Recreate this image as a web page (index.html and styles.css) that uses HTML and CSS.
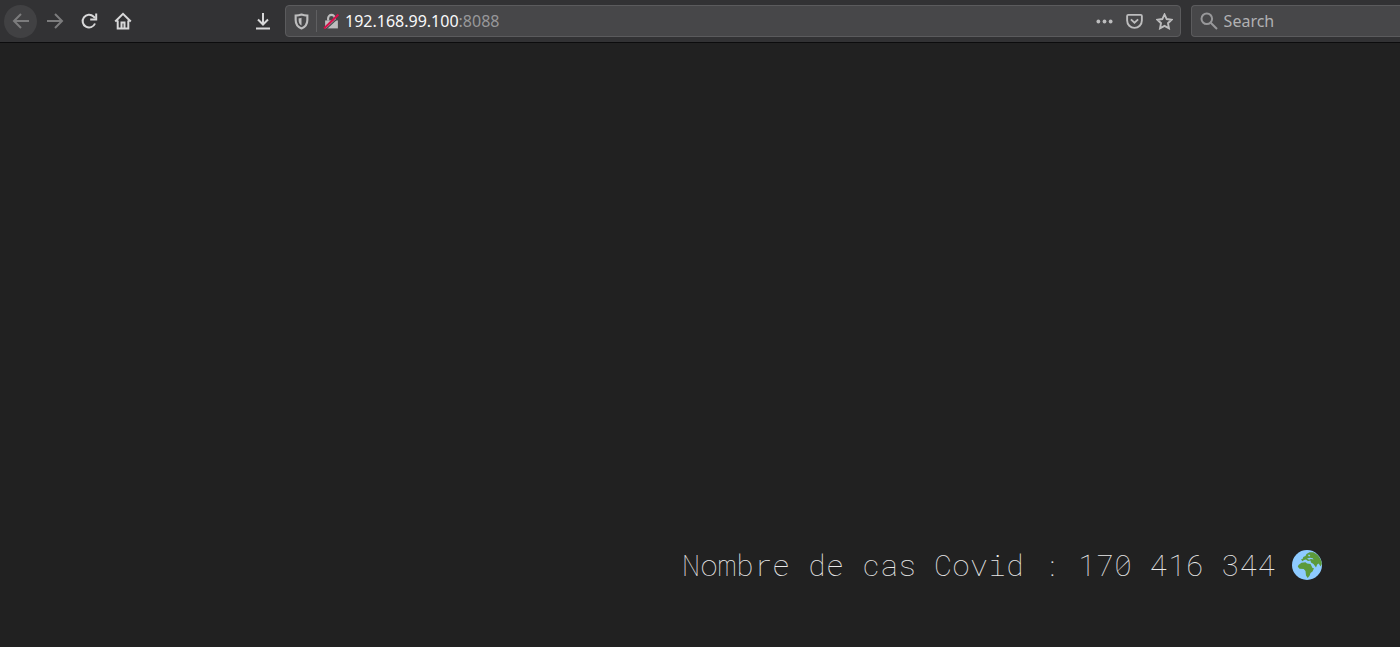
FILE: index.html
```html
<!DOCTYPE html>
<html lang="fr">
<head>
  <meta charset="UTF-8">
  <meta name="viewport" content="width=device-width, initial-scale=1.0">
  <title>192.168.99.100:8088</title>
  <link rel="stylesheet" href="styles.css">
</head>

<body>
  <!-- Browser toolbar -->
  <header class="toolbar">
    <nav class="nav-buttons">
      <button class="nav-btn back" aria-label="Back">
        <svg viewBox="0 0 18 18"><path d="M17 9H2M9 2L2 9l7 7"/></svg>
      </button>
      <button class="nav-btn forward" aria-label="Forward">
        <svg viewBox="0 0 18 18"><path d="M1 9h15M9 2l7 7-7 7"/></svg>
      </button>
      <button class="nav-btn" aria-label="Reload">
        <svg viewBox="0 0 18 18"><path d="M15 11.5A6.4 6.4 0 1 1 13.500 4.500L15 6"/><path d="M16.200 1.500v6h-6"/></svg>
      </button>
      <button class="nav-btn" aria-label="Home">
        <svg viewBox="0 0 18 18"><path d="M1.200 9.500L9 1.800l7.800 7.700M3.700 8.500v8h10.600v-8M7.500 16v-5.500h3V16"/></svg>
      </button>
    </nav>

    <button class="nav-btn" aria-label="Downloads">
      <svg viewBox="0 0 18 18"><path d="M9 1v11.500M4 7.500l5 5 5-5M2 16.500h14"/></svg>
    </button>

    <div class="url-bar">
      <button class="icon-btn" aria-label="Tracking protection">
        <svg viewBox="0 0 16 16"><path d="M8 1.500c2 .8 4 1 5.500 1v4c0 4-1.800 6.500-5.500 8-3.700-1.500-5.500-4-5.500-8v-4c1.500 0 3.500-.2 5.500-1z"/><path class="fill" d="M8 4.500v7.300C6 10.500 5.300 9 5.300 6.500V5c1 0 1.800-.2 2.700-.5z"/></svg>
      </button>
      <span class="separator"></span>
      <button class="icon-btn lock" aria-label="Connection not secure">
        <svg viewBox="0 0 16 16"><path class="fill" d="M2 7h12v7.500H2z"/><path d="M4.800 7V5a3.200 3.200 0 0 1 6.400 0v2"/><path class="slash-gap" d="M2 16L16 3"/><path class="slash" d="M1 14.500L14.500 1.500"/></svg>
      </button>
      <div class="url" role="textbox" aria-label="Address" contenteditable="true" spellcheck="false">192.168.99.100<span class="port">:8088</span></div>
      <div class="page-actions">
        <button class="icon-btn" aria-label="Page actions">
          <svg viewBox="0 0 18 18"><g class="fill"><circle cx="2.500" cy="9" r="2"/><circle cx="9" cy="9" r="2"/><circle cx="15.500" cy="9" r="2"/></g></svg>
        </button>
        <button class="icon-btn" aria-label="Save to Pocket">
          <svg viewBox="0 0 18 18"><path d="M2.500 2h13q1.300 0 1.300 1.300V8a7.800 7.800 0 0 1-15.600 0V3.300Q1.200 2 2.500 2z"/><path d="M5.200 6.800L9 10.300l3.800-3.500"/></svg>
        </button>
        <button class="icon-btn" aria-label="Bookmark this page">
          <svg viewBox="0 0 18 18"><path d="M9 1.500l2.300 4.900 5.300.7-3.900 3.700 1 5.400L9 13.600l-4.700 2.600 1-5.400L1.400 7.100l5.300-.7z"/></svg>
        </button>
      </div>
    </div>

    <label class="search-bar">
      <svg viewBox="0 0 18 18"><circle cx="6.800" cy="6.800" r="5.300"/><path d="M10.700 10.700L17 17"/></svg>
      <input type="text" class="search-input" placeholder="Search" aria-label="Search">
    </label>
  </header>

  <!-- Page content -->
  <main class="content">
    <p class="counter">
      <span class="counter-text">Nombre de cas Covid : 170 416 344</span>
      <svg class="globe" viewBox="0 0 30 30" role="img" aria-label="Globe">
        <circle class="sea" cx="15" cy="15" r="15"/>
        <path class="land" d="M6.500 15l3-2.200 4-.5 1.500 1.200 3.500.4 2 4 1.500.3-1.500 3.300-2 1.500-.8 2.500-2 2.500-1.700-2.500-.5-4.500-1.800-2-4.200-.3-1.700-2z"/>
        <path class="land" d="M9 9.500l2-1 .2-1.500 2.300-1 1-2 3-1.800 3.800.1C26 4.500 29.500 9 29.800 14l-1.300 2.500-1.800-3-1.500 1-1.200 3-2.500-3.500-2.500-1.500-.5-2-2.500.5-2-1.500-2 .5-1.500 1.200z"/>
        <path class="sea" d="M15 8.500l3-.8 2.800.5.7 1.200-2.500-.3-2 .6zM16.500 4.500l1.800.5-.8 1.500-1.300-.5z"/>
      </svg>
    </p>
  </main>
</body>
</html>
```

FILE: styles.css
```css
body {
  margin: 0;
  min-height: 100vh;
  display: flex;
  flex-direction: column;
  background-color: #212121;
  font-family: "Noto Sans", sans-serif;
  font-size: 16px;
}

button {
  padding: 0;
  border: none;
  background: none;
  color: inherit;
  cursor: pointer;
}

svg {
  display: block;
  width: 18px;
  height: 18px;
  fill: none;
  stroke: currentColor;
  stroke-width: 2;
  flex-shrink: 0;
}

svg .fill {
  fill: currentColor;
  stroke: none;
}

/* Toolbar */
.toolbar {
  display: flex;
  align-items: center;
  box-sizing: border-box;
  height: 43px;
  padding-left: 4px;
  background-color: #323234;
  border-bottom: 1px solid #0c0c0d;
  color: #d8d8d9;
}

.nav-buttons {
  display: flex;
  gap: 1px;
  margin-right: 107px;
}

.nav-btn {
  display: flex;
  align-items: center;
  justify-content: center;
  width: 33px;
  height: 33px;
  border-radius: 50%;
}

.back {
  background-color: #414143;
}

.back,
.forward {
  color: #7c7c7d;
}

.url-bar,
.search-bar {
  display: flex;
  align-items: center;
  box-sizing: border-box;
  min-width: 0;
  height: 32px;
  background-color: #474749;
  border: 1px solid #5b5b5d;
  border-radius: 4px;
}

.url-bar {
  flex: 1;
  margin-left: 6px;
  padding: 0 6px;
  color: #bdbdbe;
}

.icon-btn {
  display: flex;
  padding: 0 1px;
}

.icon-btn svg {
  width: 17px;
  height: 17px;
}

.separator {
  width: 1px;
  height: 22px;
  margin: 0 5px;
  background-color: #5f5f61;
}

.lock .slash-gap {
  stroke: #474749;
  stroke-width: 1;
}

.lock .slash {
  stroke: #d70f4b;
}

.url {
  flex: 1;
  margin-left: 4px;
  color: #f9f9fa;
  white-space: nowrap;
  overflow: hidden;
  outline: none;
}

.port {
  color: #98989a;
}

.page-actions {
  display: flex;
  gap: 11px;
}

.search-bar {
  flex: 0 0 15%;
  gap: 6px;
  margin-left: 10px;
  padding-left: 8px;
  border-right: none;
  border-radius: 4px 0 0 4px;
  color: #98989a;
}

.search-input {
  flex: 1;
  min-width: 0;
  padding: 0;
  border: none;
  outline: none;
  background: none;
  color: #f9f9fa;
  font: inherit;
}

.search-input::placeholder {
  color: #b1b1b3;
  opacity: 1;
}

/* Counter */
.content {
  flex: 1;
  display: flex;
  align-items: flex-end;
  justify-content: flex-end;
  padding: 0 78px 60px 0;
}

.counter {
  display: flex;
  align-items: center;
  gap: 16px;
  margin: 0;
  color: #fff;
  font-family: "Roboto Mono", "Liberation Mono", monospace;
  font-size: 30px;
  font-weight: 100;
  line-height: 44px;
}

.counter-text {
  opacity: 0.9;
}

.globe {
  width: 30px;
  height: 30px;
}

.globe .sea {
  fill: #8ecbff;
  stroke: none;
}

.globe .land {
  fill: #5c9a3b;
  stroke: none;
}
```
